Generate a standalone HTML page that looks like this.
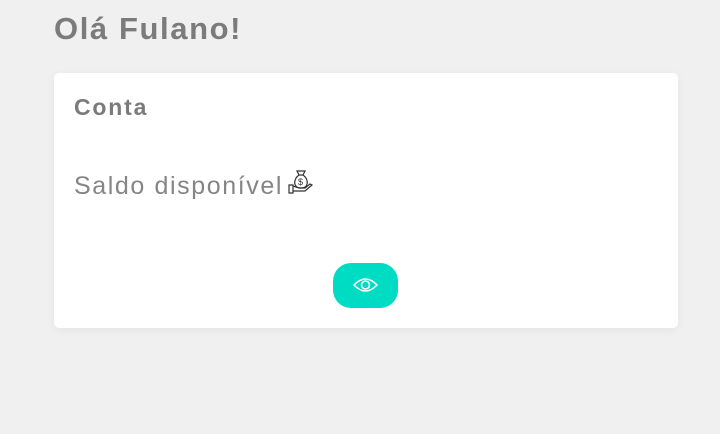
<!DOCTYPE html>
<html><head><style>
body{margin:0;background:#f0f0f0;width:720px;height:434px;overflow:hidden;font-family:"Liberation Sans",sans-serif;}
h1{position:absolute;left:54px;top:11px;margin:0;font-size:31px;font-weight:bold;color:#7b7b7b;letter-spacing:1.6px}
.card{position:absolute;left:54px;top:73px;width:624px;height:255px;background:#fff;border-radius:5px;box-shadow:0 2px 10px rgba(0,0,0,0.05)}
.t{position:absolute;left:20px;top:21px;font-size:23px;font-weight:bold;color:#7b7b7b;letter-spacing:1.8px}
.s{position:absolute;left:20px;top:95px;font-size:25px;color:#858585;letter-spacing:1.6px}
.btn{position:absolute;left:279px;top:190px;width:65px;height:45px;background:#00dcc3;border-radius:18px}
</style></head><body>
<h1>Olá Fulano!</h1>
<div class="card">
<div class="t">Conta</div>
<div class="s">Saldo disponível<svg width="28" height="28" viewBox="0 0 28 28" style="vertical-align:-2px;margin-left:4px"><g fill="none" stroke="#333" stroke-width="1.2"><path d="M10 3h8l-2 4h-4z"/><path d="M12 7C6 11 6 20 14 20s8-9 2-13"/><path d="M2 17h4v8H2z"/><path d="M6 18l6 2h6l5-4 2 1-7 6H6"/></g><text x="11" y="17" font-size="9" fill="#333" font-family="Liberation Sans">$</text></svg></div>
<div class="btn"><svg width="65" height="45" viewBox="0 0 65 45"><path d="M21 22q11.5-12 23 0q-11.5 12-23 0z" fill="none" stroke="#fff" stroke-width="1.6"/><circle cx="32.5" cy="22" r="4" fill="none" stroke="#fff" stroke-width="1.6"/></svg></div>
</div>
</body></html>
